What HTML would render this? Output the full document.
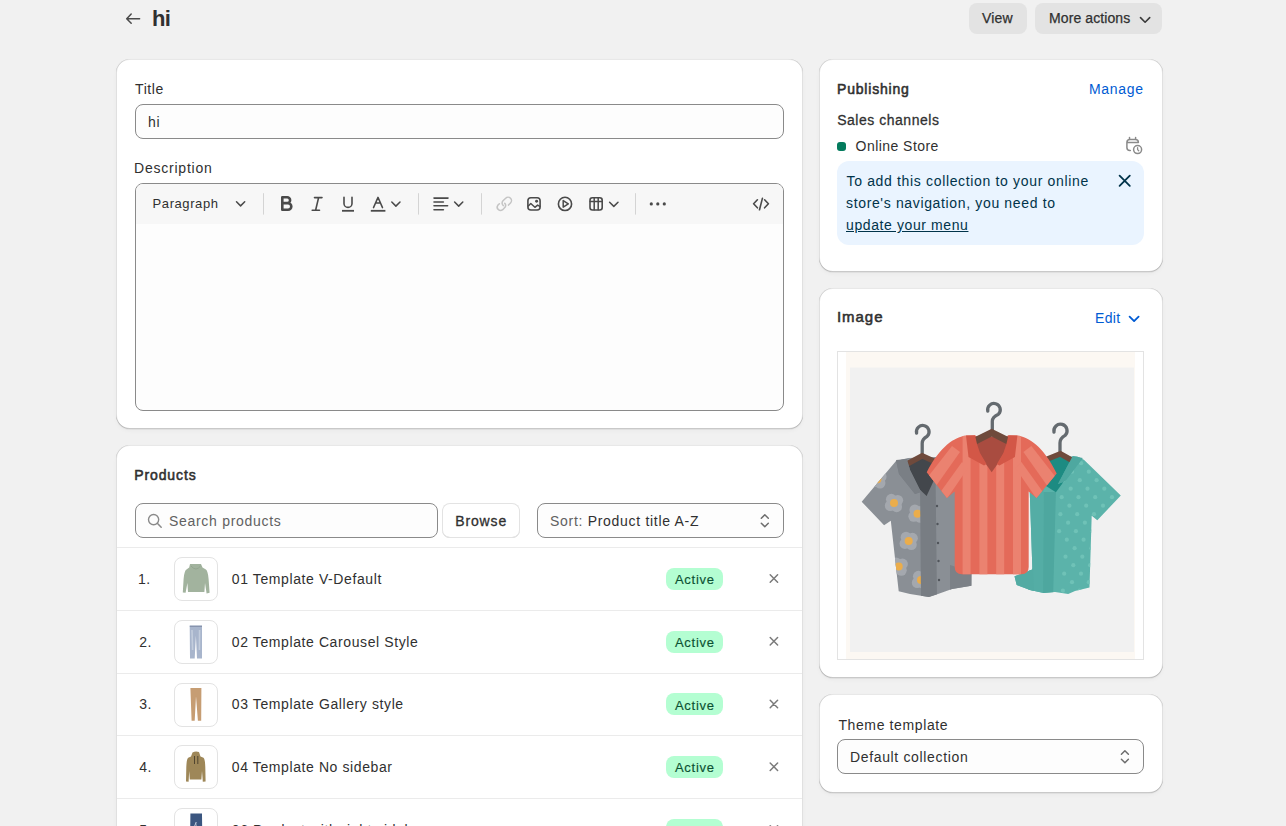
<!DOCTYPE html>
<html><head><meta charset="utf-8">
<style>
*{box-sizing:border-box;margin:0;padding:0}
html,body{width:1286px;height:826px;overflow:hidden;background:#f1f1f1}
body{position:relative;font-family:"Liberation Sans",sans-serif;color:#303030;font-size:14px;line-height:20px}
.a{position:absolute}
.t{position:absolute;white-space:nowrap}
.card{position:absolute;background:#fff;border-radius:14px;box-shadow:0 1px 0 0 rgba(0,0,0,0.045),0 2px 4px 0 rgba(0,0,0,0.03),inset 1px 0 0 rgba(0,0,0,0.12),inset -1px 0 0 rgba(0,0,0,0.12),inset 0 -1px 0 rgba(0,0,0,0.21),inset 0 1px 0 rgba(0,0,0,0.09)}
.btn{position:absolute;background:#e3e3e3;border-radius:8px}
.inp{position:absolute;background:#fdfdfd;border:1px solid #8a8a8a;border-radius:8px}
.sep{position:absolute;height:1px;background:#ebebeb}
.thumb{position:absolute;width:44px;height:44px;border:1px solid #e3e3e3;border-radius:8px;background:#fff;overflow:hidden}
.badge{position:absolute;width:57px;height:22px;border-radius:8px;background:#b4fed2}
svg{display:block}
</style></head><body>
<div class="t" style="left:152px;top:5.38px;font-size:22px;line-height:28px;letter-spacing:-0.8px;font-weight:700;">hi</div>
<div class="btn" style="left:969px;top:3px;width:58px;height:31px;"></div>
<div class="t" style="left:982px;top:8.05px;font-size:14px;line-height:20px;letter-spacing:0.2px;-webkit-text-stroke:0.25px #303030;">View</div>
<div class="btn" style="left:1035px;top:3px;width:127px;height:31px;"></div>
<div class="t" style="left:1049px;top:8.05px;font-size:14px;line-height:20px;letter-spacing:0.1px;-webkit-text-stroke:0.25px #303030;">More actions</div>
<div class="card" style="left:116px;top:59px;width:687px;height:370px"></div>
<div class="card" style="left:116px;top:445px;width:687px;height:420px"></div>
<div class="card" style="left:819px;top:59px;width:344px;height:213px"></div>
<div class="card" style="left:819px;top:288px;width:344px;height:390px"></div>
<div class="card" style="left:819px;top:694px;width:344px;height:99px"></div>
<div class="t" style="left:135px;top:79.15px;font-size:14px;line-height:20px;letter-spacing:0.6px;">Title</div>
<div class="inp" style="left:135px;top:104px;width:649px;height:35px;"></div>
<div class="t" style="left:148px;top:111.95px;font-size:14px;line-height:20px;letter-spacing:0.6px;">hi</div>
<div class="t" style="left:134px;top:157.95px;font-size:14px;line-height:20px;letter-spacing:0.78px;">Description</div>
<div class="inp" style="left:135px;top:183px;width:649px;height:228px;overflow:hidden"><div class="a" style="left:0;top:0;width:100%;height:40px;background:#f7f7f7"></div></div>
<div class="t" style="left:152.6px;top:194.40px;font-size:13px;line-height:20px;letter-spacing:0.58px;">Paragraph</div>
<div class="t" style="left:134.2px;top:465.35px;font-size:14px;line-height:20px;letter-spacing:0.9px;-webkit-text-stroke:0.55px #303030;">Products</div>
<div class="inp" style="left:135px;top:503px;width:303px;height:35px;"></div>
<div class="t" style="left:169px;top:510.75px;font-size:14px;line-height:20px;letter-spacing:0.7px;color:#616161;">Search products</div>
<div class="a" style="left:442px;top:503px;width:78px;height:35px;border-radius:8px;box-shadow:inset 0 0 0 1px #e3e3e3,inset 0 -1px 0 #d4d4d4;background:#fff"></div>
<div class="t" style="left:455.2px;top:510.75px;font-size:14px;line-height:20px;letter-spacing:0.88px;-webkit-text-stroke:0.3px #303030;">Browse</div>
<div class="inp" style="left:537px;top:503px;width:247px;height:35px;"></div>
<div class="t" style="left:550px;top:510.75px;font-size:14px;line-height:20px;letter-spacing:0.7px;"><span style="color:#616161">Sort:</span> Product title A-Z</div>
<div class="sep" style="left:117px;top:547.0px;width:685px;height:1px;"></div>
<div class="t" style="left:138px;top:568.95px;font-size:14px;line-height:20px;letter-spacing:0.4px;">1.</div>
<div class="thumb" style="left:174px;top:557.00px"><svg width="42" height="42" viewBox="1 1 42 42"><path d="M16 7 H27 L28.5 10.5 L31.5 12.2 Q34 13.5 34.6 22 L35.6 35.8 L32.6 36.4 L31 26 L30.4 35 H14 L13.4 26 L11.6 35.8 L8.8 35.4 L9.6 22 Q10.2 13.5 12.8 12.2 L15.2 10.5 Z" fill="#a2b39e"/><path d="M17 9 Q22 15 26.5 9" stroke="#94a690" stroke-width="1" fill="none"/></svg></div>
<div class="t" style="left:231.8px;top:568.95px;font-size:14px;line-height:20px;letter-spacing:0.6px;">01 Template V-Default</div>
<div class="badge" style="left:666px;top:567.8px;width:57px;height:22px;"></div>
<div class="t" style="left:675px;top:570.20px;font-size:13px;line-height:20px;letter-spacing:0.7px;color:#0c5132;-webkit-text-stroke:0.15px #0c5132;">Active</div>
<div class="sep" style="left:117px;top:609.75px;width:685px;height:1px;"></div>
<div class="t" style="left:139.3px;top:631.70px;font-size:14px;line-height:20px;letter-spacing:0.4px;">2.</div>
<div class="thumb" style="left:174px;top:619.75px"><svg width="42" height="42" viewBox="1 1 42 42"><path d="M15.7 5.5 H28 L28 38.4 H23 L21.9 15.7 L20.7 38.4 H16 Z" fill="#a8b5cc"/><path d="M15.8 6.3 H28" stroke="#8793ad" stroke-width="1.2"/><path d="M18 10 L18.6 30 M25.6 10 L25.4 30" stroke="#c3cddd" stroke-width="1.6"/></svg></div>
<div class="t" style="left:231.8px;top:631.70px;font-size:14px;line-height:20px;letter-spacing:0.6px;">02 Template Carousel Style</div>
<div class="badge" style="left:666px;top:630.55px;width:57px;height:22px;"></div>
<div class="t" style="left:675px;top:632.95px;font-size:13px;line-height:20px;letter-spacing:0.7px;color:#0c5132;-webkit-text-stroke:0.15px #0c5132;">Active</div>
<div class="sep" style="left:117px;top:672.5px;width:685px;height:1px;"></div>
<div class="t" style="left:139.3px;top:694.45px;font-size:14px;line-height:20px;letter-spacing:0.4px;">3.</div>
<div class="thumb" style="left:174px;top:682.50px"><svg width="42" height="42" viewBox="1 1 42 42"><path d="M16.4 5 H27.4 L27.2 37.8 H23.9 L22 13.2 L20.7 37.8 H17.6 Z" fill="#c69d73"/></svg></div>
<div class="t" style="left:231.8px;top:694.45px;font-size:14px;line-height:20px;letter-spacing:0.6px;">03 Template Gallery style</div>
<div class="badge" style="left:666px;top:693.3px;width:57px;height:22px;"></div>
<div class="t" style="left:675px;top:695.70px;font-size:13px;line-height:20px;letter-spacing:0.7px;color:#0c5132;-webkit-text-stroke:0.15px #0c5132;">Active</div>
<div class="sep" style="left:117px;top:735.25px;width:685px;height:1px;"></div>
<div class="t" style="left:139.3px;top:757.20px;font-size:14px;line-height:20px;letter-spacing:0.4px;">4.</div>
<div class="thumb" style="left:174px;top:745.25px"><svg width="42" height="42" viewBox="1 1 42 42"><path d="M18.5 7.5 Q21.5 5.8 25 7 L26.5 11.5 L29.5 12.8 Q31 14 31.3 22 L31.6 36.6 L28.8 36.8 L28 26 L27.4 34.6 H15.8 L15.2 26 L14.6 36.8 L12 36.6 L12.3 22 Q12.6 14 14.2 12.8 L17 11.5 Z" fill="#9e8758"/><path d="M20.5 11 V19 M23.8 11 V19" stroke="#3e3524" stroke-width="0.8"/></svg></div>
<div class="t" style="left:231.8px;top:757.20px;font-size:14px;line-height:20px;letter-spacing:0.6px;">04 Template No sidebar</div>
<div class="badge" style="left:666px;top:756.05px;width:57px;height:22px;"></div>
<div class="t" style="left:675px;top:758.45px;font-size:13px;line-height:20px;letter-spacing:0.7px;color:#0c5132;-webkit-text-stroke:0.15px #0c5132;">Active</div>
<div class="sep" style="left:117px;top:798.0px;width:685px;height:1px;"></div>
<div class="t" style="left:139.3px;top:819.95px;font-size:14px;line-height:20px;letter-spacing:0.4px;">5.</div>
<div class="thumb" style="left:174px;top:808.00px"><svg width="42" height="42" viewBox="1 1 42 42"><path d="M16.4 5.5 H28 L28.4 38.6 H23.4 L22.2 14 L21 38.6 H16 Z" fill="#3b5680"/><path d="M22.2 14 L20 20" stroke="#c9d3e3" stroke-width="1"/></svg></div>
<div class="t" style="left:231.8px;top:819.95px;font-size:14px;line-height:20px;letter-spacing:0.6px;">06 Product with right sidebar</div>
<div class="badge" style="left:666px;top:818.8px;width:57px;height:22px;"></div>
<div class="t" style="left:675px;top:821.20px;font-size:13px;line-height:20px;letter-spacing:0.7px;color:#0c5132;-webkit-text-stroke:0.15px #0c5132;">Active</div>
<div class="t" style="left:837px;top:78.85px;font-size:14px;line-height:20px;letter-spacing:0.8px;-webkit-text-stroke:0.55px #303030;">Publishing</div>
<div class="t" style="left:1089px;top:78.85px;font-size:14px;line-height:20px;letter-spacing:0.68px;color:#005bd3;">Manage</div>
<div class="t" style="left:837.2px;top:109.65px;font-size:14px;line-height:20px;letter-spacing:0.52px;-webkit-text-stroke:0.28px #303030;">Sales channels</div>
<div class="a" style="left:837px;top:142px;width:9px;height:9px;border-radius:3px;background:#047b5d"></div>
<div class="t" style="left:855.6px;top:135.75px;font-size:14px;line-height:20px;letter-spacing:0.45px;">Online Store</div>
<div class="a" style="left:837px;top:161px;width:307px;height:84px;border-radius:12px;background:#eaf4ff"></div>
<div class="t" style="left:846.5px;top:170.35px;font-size:14px;line-height:22px;letter-spacing:0.66px;color:#00334a;">To add this collection to your online</div>
<div class="t" style="left:846px;top:192.35px;font-size:14px;line-height:22px;letter-spacing:0.65px;color:#00334a;">store's navigation, you need to</div>
<div class="t" style="left:846px;top:214.35px;font-size:14px;line-height:22px;letter-spacing:0.6px;color:#00334a;"><span style="text-decoration:underline">update your menu</span></div>
<div class="t" style="left:837px;top:307.40px;font-size:15px;line-height:20px;letter-spacing:0.95px;-webkit-text-stroke:0.55px #303030;">Image</div>
<div class="t" style="left:1095px;top:308.15px;font-size:14px;line-height:20px;letter-spacing:0.3px;color:#005bd3;">Edit</div>
<div class="a" style="left:837px;top:351px;width:307px;height:309px;border:1px solid #e3e3e3;background:#fff"></div>
<div class="a" style="left:846px;top:352px;width:289px;height:307px;background:#fcf8f3"></div>
<svg class="a" style="left:846px;top:352px" width="289" height="307" viewBox="846 352 289 307">
 <rect x="846" y="352" width="289" height="307" fill="#fcf8f3"/>
 <rect x="850" y="367.6" width="284" height="284.4" fill="#f1f1f1"/>
 <defs>
  <clipPath id="gshirt"><path d="M896 461 L908 458 L936 457 L972 470 L971.4 585.7 L952 589 L938 594 L928.9 597 L910 594 L898.7 591.3 L890.8 520.7 L884.1 525.2 L861.7 501.7 Z"/></clipPath>
  <clipPath id="tshirt"><path d="M1047 457 L1077.2 456.4 L1083.9 459.8 L1120.8 495.6 L1097.3 520.2 L1091.7 515.7 L1089.5 587.4 L1075 591 L1068.2 594.1 L1055 592 L1043.6 593 L1030 590 L1016.7 585.1 L1014.5 576.2 L1032.4 569.5 L1029 470 Z"/></clipPath>
 </defs>
 <!-- hooks -->
 <g fill="none" stroke="#646a6f" stroke-width="3.3" stroke-linecap="round">
  <path d="M916.59 433.06 A6.3 6.3 0 1 1 927.24 436.21 Q922.2 439.05 922.2 443.14 V454"/>
  <path d="M1054.00 432.12 A6.6 6.6 0 1 1 1065.15 435.42 Q1060.0 438.39 1060.0 442.68 V452"/>
  <path d="M987.79 411.06 A6.3 6.3 0 1 1 998.44 414.21 Q992.3 417.05 992.3 421.14 V432"/>
 </g>
 <!-- gray shirt -->
 
 <g clip-path="url(#gshirt)">
  <rect x="850" y="440" width="130" height="170" fill="#8a8f95"/>
  <circle cx="880.04" cy="483.07" r="5.4" fill="#a4a8ae"/><circle cx="873.63" cy="481.94" r="5.4" fill="#a4a8ae"/><circle cx="874.76" cy="475.53" r="5.4" fill="#a4a8ae"/><circle cx="881.17" cy="476.66" r="5.4" fill="#a4a8ae"/><circle cx="877.4" cy="479.3" r="4" fill="#ebad4b"/><circle cx="896.64" cy="506.77" r="5.4" fill="#a4a8ae"/><circle cx="890.23" cy="505.64" r="5.4" fill="#a4a8ae"/><circle cx="891.36" cy="499.23" r="5.4" fill="#a4a8ae"/><circle cx="897.77" cy="500.36" r="5.4" fill="#a4a8ae"/><circle cx="894.0" cy="503.0" r="4" fill="#ebad4b"/><circle cx="920.14" cy="517.47" r="5.4" fill="#a4a8ae"/><circle cx="913.73" cy="516.34" r="5.4" fill="#a4a8ae"/><circle cx="914.86" cy="509.93" r="5.4" fill="#a4a8ae"/><circle cx="921.27" cy="511.06" r="5.4" fill="#a4a8ae"/><circle cx="917.5" cy="513.7" r="4" fill="#ebad4b"/><circle cx="911.34" cy="544.67" r="5.4" fill="#a4a8ae"/><circle cx="904.93" cy="543.54" r="5.4" fill="#a4a8ae"/><circle cx="906.06" cy="537.13" r="5.4" fill="#a4a8ae"/><circle cx="912.47" cy="538.26" r="5.4" fill="#a4a8ae"/><circle cx="908.7" cy="540.9" r="4" fill="#ebad4b"/><circle cx="901.34" cy="570.37" r="5.4" fill="#a4a8ae"/><circle cx="894.93" cy="569.24" r="5.4" fill="#a4a8ae"/><circle cx="896.06" cy="562.83" r="5.4" fill="#a4a8ae"/><circle cx="902.47" cy="563.96" r="5.4" fill="#a4a8ae"/><circle cx="898.7" cy="566.6" r="4" fill="#ebad4b"/><circle cx="923.64" cy="583.77" r="5.4" fill="#a4a8ae"/><circle cx="917.23" cy="582.64" r="5.4" fill="#a4a8ae"/><circle cx="918.36" cy="576.23" r="5.4" fill="#a4a8ae"/><circle cx="924.77" cy="577.36" r="5.4" fill="#a4a8ae"/><circle cx="921" cy="580" r="4" fill="#ebad4b"/>
  <path d="M920 480 L935.6 480 L937 600 L921 600 Z" fill="#787d83"/>
  <path d="M906 462 Q922 454 938 461 L934 480 L926.6 496 L914 484 Z" fill="#43474c"/>
  <path d="M896 460 L907 459 L910 470 L921 492 L915 494 L899 474 Z" fill="#7a7f85"/>
  <circle cx="937" cy="506" r="1.2" fill="#50545a"/><circle cx="937.5" cy="524" r="1.2" fill="#50545a"/><circle cx="938" cy="543" r="1.2" fill="#50545a"/><circle cx="938.5" cy="561" r="1.2" fill="#50545a"/><circle cx="939" cy="580" r="1.2" fill="#50545a"/>
  <path d="M950 565 L972 572 L972 590 L950 590 Z" fill="#7c8187"/>
 </g>
 <path d="M908 463.5 L922.2 455.8 L936.8 462.5" fill="none" stroke="#6f4a3c" stroke-width="5.5" stroke-linejoin="miter"/>
 <path d="M896 460 L907 459 L910 470 L921 492 L915 494 L899 474 Z" fill="#7a7f85"/>

 <!-- teal shirt -->
 
 <g clip-path="url(#tshirt)">
  <rect x="1010" y="440" width="120" height="170" fill="#5bb3aa"/>
  <circle cx="1064.3" cy="463.2" r="2.1" fill="#6fc2b7"/><circle cx="1081.1" cy="463.2" r="2.1" fill="#6fc2b7"/><circle cx="1097.9" cy="463.2" r="2.1" fill="#6fc2b7"/><circle cx="1114.7" cy="463.2" r="2.1" fill="#6fc2b7"/><circle cx="1131.5" cy="463.2" r="2.1" fill="#6fc2b7"/><circle cx="1072.0" cy="471.7" r="2.1" fill="#6fc2b7"/><circle cx="1088.8" cy="471.7" r="2.1" fill="#6fc2b7"/><circle cx="1105.6" cy="471.7" r="2.1" fill="#6fc2b7"/><circle cx="1122.4" cy="471.7" r="2.1" fill="#6fc2b7"/><circle cx="1063.0" cy="480.2" r="2.1" fill="#6fc2b7"/><circle cx="1079.8" cy="480.2" r="2.1" fill="#6fc2b7"/><circle cx="1096.6" cy="480.2" r="2.1" fill="#6fc2b7"/><circle cx="1113.4" cy="480.2" r="2.1" fill="#6fc2b7"/><circle cx="1130.2" cy="480.2" r="2.1" fill="#6fc2b7"/><circle cx="1070.7" cy="488.7" r="2.1" fill="#6fc2b7"/><circle cx="1087.5" cy="488.7" r="2.1" fill="#6fc2b7"/><circle cx="1104.3" cy="488.7" r="2.1" fill="#6fc2b7"/><circle cx="1121.1" cy="488.7" r="2.1" fill="#6fc2b7"/><circle cx="1061.7" cy="497.2" r="2.1" fill="#6fc2b7"/><circle cx="1078.5" cy="497.2" r="2.1" fill="#6fc2b7"/><circle cx="1095.2" cy="497.2" r="2.1" fill="#6fc2b7"/><circle cx="1112.0" cy="497.2" r="2.1" fill="#6fc2b7"/><circle cx="1128.9" cy="497.2" r="2.1" fill="#6fc2b7"/><circle cx="1069.4" cy="505.7" r="2.1" fill="#6fc2b7"/><circle cx="1086.2" cy="505.7" r="2.1" fill="#6fc2b7"/><circle cx="1103.0" cy="505.7" r="2.1" fill="#6fc2b7"/><circle cx="1119.8" cy="505.7" r="2.1" fill="#6fc2b7"/><circle cx="1060.4" cy="514.2" r="2.1" fill="#6fc2b7"/><circle cx="1077.2" cy="514.2" r="2.1" fill="#6fc2b7"/><circle cx="1094.0" cy="514.2" r="2.1" fill="#6fc2b7"/><circle cx="1110.8" cy="514.2" r="2.1" fill="#6fc2b7"/><circle cx="1127.6" cy="514.2" r="2.1" fill="#6fc2b7"/><circle cx="1068.1" cy="522.7" r="2.1" fill="#6fc2b7"/><circle cx="1084.9" cy="522.7" r="2.1" fill="#6fc2b7"/><circle cx="1101.7" cy="522.7" r="2.1" fill="#6fc2b7"/><circle cx="1118.5" cy="522.7" r="2.1" fill="#6fc2b7"/><circle cx="1059.1" cy="531.2" r="2.1" fill="#6fc2b7"/><circle cx="1075.9" cy="531.2" r="2.1" fill="#6fc2b7"/><circle cx="1092.7" cy="531.2" r="2.1" fill="#6fc2b7"/><circle cx="1109.5" cy="531.2" r="2.1" fill="#6fc2b7"/><circle cx="1126.3" cy="531.2" r="2.1" fill="#6fc2b7"/><circle cx="1066.8" cy="539.7" r="2.1" fill="#6fc2b7"/><circle cx="1083.6" cy="539.7" r="2.1" fill="#6fc2b7"/><circle cx="1100.4" cy="539.7" r="2.1" fill="#6fc2b7"/><circle cx="1117.2" cy="539.7" r="2.1" fill="#6fc2b7"/><circle cx="1074.6" cy="548.2" r="2.1" fill="#6fc2b7"/><circle cx="1091.4" cy="548.2" r="2.1" fill="#6fc2b7"/><circle cx="1108.2" cy="548.2" r="2.1" fill="#6fc2b7"/><circle cx="1125.0" cy="548.2" r="2.1" fill="#6fc2b7"/><circle cx="1065.5" cy="556.7" r="2.1" fill="#6fc2b7"/><circle cx="1082.3" cy="556.7" r="2.1" fill="#6fc2b7"/><circle cx="1099.1" cy="556.7" r="2.1" fill="#6fc2b7"/><circle cx="1115.9" cy="556.7" r="2.1" fill="#6fc2b7"/><circle cx="1073.3" cy="565.2" r="2.1" fill="#6fc2b7"/><circle cx="1090.1" cy="565.2" r="2.1" fill="#6fc2b7"/><circle cx="1106.9" cy="565.2" r="2.1" fill="#6fc2b7"/><circle cx="1123.7" cy="565.2" r="2.1" fill="#6fc2b7"/><circle cx="1064.2" cy="573.7" r="2.1" fill="#6fc2b7"/><circle cx="1081.0" cy="573.7" r="2.1" fill="#6fc2b7"/><circle cx="1097.8" cy="573.7" r="2.1" fill="#6fc2b7"/><circle cx="1114.6" cy="573.7" r="2.1" fill="#6fc2b7"/><circle cx="1072.0" cy="582.2" r="2.1" fill="#6fc2b7"/><circle cx="1088.8" cy="582.2" r="2.1" fill="#6fc2b7"/><circle cx="1105.5" cy="582.2" r="2.1" fill="#6fc2b7"/><circle cx="1122.4" cy="582.2" r="2.1" fill="#6fc2b7"/><circle cx="1062.9" cy="590.7" r="2.1" fill="#6fc2b7"/><circle cx="1079.7" cy="590.7" r="2.1" fill="#6fc2b7"/><circle cx="1096.5" cy="590.7" r="2.1" fill="#6fc2b7"/><circle cx="1113.3" cy="590.7" r="2.1" fill="#6fc2b7"/><circle cx="1070.7" cy="599.2" r="2.1" fill="#6fc2b7"/><circle cx="1087.5" cy="599.2" r="2.1" fill="#6fc2b7"/><circle cx="1104.2" cy="599.2" r="2.1" fill="#6fc2b7"/><circle cx="1121.1" cy="599.2" r="2.1" fill="#6fc2b7"/>
  <path d="M1028 470 L1043.6 470 L1043 600 L1028 600 Z" fill="#54ada5"/><path d="M1043.6 492 L1055.9 492 L1053 600 L1043 600 Z" fill="#4ea79f"/>
  <path d="M1044 459 Q1060 453 1074 462 L1062 484 L1055.9 492.2 L1046 486 Z" fill="#1d8b82"/>
  <path d="M1072.7 456 L1082.8 458 L1066 480 L1062.6 482.2 L1058 484 Z" fill="#4ea8a0"/>
  <path d="M1014 576 L1033 568 L1034 592 L1014 592 Z" fill="#52aba3"/>
 </g>
 <path d="M1045 460 L1060.4 453.8 L1074 461.5" fill="none" stroke="#6f4a3c" stroke-width="5.5" stroke-linejoin="miter"/>
 <path d="M1072.7 456 L1082.8 458 L1066 480 L1062.6 482.2 L1058 484 Z" fill="#4ea8a0"/>

 <!-- coral shirt -->
 
 <defs>
  <clipPath id="cshirt"><path d="M966 435.5 L975.5 435.5 Q991.7 447 1008 435.5 L1017.4 435.5 C1028.4 437 1043.4 446 1056.7 473.4 L1036.5 498.1 L1028.7 491.4 L1028.7 567 Q1028.7 574.3 1021.4 574.3 L962 574.3 Q954.7 574.3 954.7 567 L954.7 491.4 L946.9 498.1 L926.7 472.3 C940 446 955 437 966 435.5 Z"/></clipPath>
 </defs>
 <g clip-path="url(#cshirt)">
  <rect x="920" y="430" width="140" height="150" fill="#e46a59"/>
  <rect x="962.6" y="436" width="8" height="140" fill="#eb8270"/><rect x="979.4" y="436" width="8" height="140" fill="#eb8270"/><rect x="996.2" y="436" width="8" height="140" fill="#eb8270"/><rect x="1013" y="436" width="8" height="140" fill="#eb8270"/>
  <path d="M927 478 L952 446 L960 452 L936 486 Z" fill="#eb8270"/>
  <path d="M939 494 L962 462 L968 468 L946 500 Z" fill="#eb8270"/>
  <path d="M1056.4 478 L1031.4 446 L1023.4 452 L1047.4 486 Z" fill="#eb8270"/>
  <path d="M1044.4 494 L1021.4 462 L1015.4 468 L1037.4 500 Z" fill="#eb8270"/>
  <rect x="954.7" y="490" width="74" height="90" fill="none"/>
 </g>
 <path d="M954.7 491.4 L954.7 567 Q954.7 574.3 962 574.3 L1021.4 574.3 Q1028.7 574.3 1028.7 567 L1028.7 491.4" fill="none"/>
 <path d="M975.5 443 Q991.7 430 1007.9 443 L1004 453 L997.9 463.6 L991.7 472.3 L985.5 463.6 L979 453 Z" fill="#a94c40"/>
 <path d="M975 441 L991.7 432.6 L1008.4 441" fill="none" stroke="#6f4a3c" stroke-width="7" stroke-linejoin="miter"/>
 <path d="M966 435.6 L975 435.3 L977 444 L980 453 L986.5 464 L984 465.5 L968.5 457 Z" fill="#d35747"/>
 <path d="M1017.4 435.6 L1008.4 435.3 L1006.4 444 L1003.4 453 L996.9 464 L999.4 465.5 L1014.9 457 Z" fill="#d35747"/>
</svg>
<div class="t" style="left:838.4px;top:714.85px;font-size:14px;line-height:20px;letter-spacing:0.62px;">Theme template</div>
<div class="inp" style="left:837px;top:739px;width:307px;height:35px;"></div>
<div class="t" style="left:850px;top:747.45px;font-size:14px;line-height:20px;letter-spacing:0.65px;">Default collection</div>
<svg class="a" style="left:0;top:0;z-index:5" width="1286" height="826" viewBox="0 0 1286 826">
<g fill="none" stroke-linecap="round" stroke-linejoin="round">
 <!-- header arrow -->
 <path d="M131.2 14.1 L126.7 18.7 L131.2 23.3 M126.9 18.7 H139.6" stroke="#4a4a4a" stroke-width="1.5"/>
 <!-- more actions chevron -->
 <path d="M1140.5 17.6 L1145.1 22.2 L1149.7 17.6" stroke="#3a3a3a" stroke-width="1.6"/>
 <!-- toolbar -->
 <path d="M236.5 201.8 L240.6 205.9 L244.7 201.8" stroke="#4a4a4a" stroke-width="1.5"/>
 <path d="M282.3 197.3 H287.2 A2.9 2.9 0 0 1 287.2 203.1 H282.3 M282.3 203.1 H288 A3.3 3.3 0 0 1 288 209.7 H282.3 M282.3 197.3 V209.7" stroke="#4a4a4a" stroke-width="2.6"/>
 <path d="M314.5 197.6 H322 M312.2 210.3 H319.5 M318.6 197.6 L315.6 210.3" stroke="#4a4a4a" stroke-width="1.6"/>
 <path d="M344 197.2 V203.4 A4 4 0 0 0 352 203.4 V197.2" stroke="#4a4a4a" stroke-width="1.6"/>
 <path d="M342 210.8 H354" stroke="#4a4a4a" stroke-width="1.8" stroke-linecap="butt"/>
 <path d="M373.5 207.6 L378 197.4 L382.5 207.6 M375.6 203.1 H380.4" stroke="#4a4a4a" stroke-width="1.5"/>
 <path d="M370.8 210.8 H385.4" stroke="#4a4a4a" stroke-width="1.8" stroke-linecap="butt"/>
 <path d="M391.8 202 L395.9 206.1 L400 202" stroke="#4a4a4a" stroke-width="1.5"/>
 <path d="M434 198.1 H448 M434 202 H443.4 M434 205.8 H447.6 M434 209.7 H443.4" stroke="#4a4a4a" stroke-width="1.6"/>
 <path d="M454.6 202 L458.7 206.1 L462.8 202" stroke="#4a4a4a" stroke-width="1.5"/>
 <!-- link (disabled) -->
 <path d="M508.4 204.2 L510.4 202.1 A3.35 3.35 0 0 0 505.6 197.3 L502.9 199.9 Q501.3 201.7 502.5 203.7 L503.2 204.8" stroke="#c4c4c4" stroke-width="1.5" transform="translate(0.1,0.9)"/>
 <path d="M504.6 202.4 Q506.3 204.1 505.1 206.2 L502.6 208.8 A3.35 3.35 0 0 1 497.8 204.2 L499.3 202.8" stroke="#c4c4c4" stroke-width="1.5" transform="translate(0.1,0.9)"/>
 <!-- image icon -->
 <rect x="527.9" y="197.8" width="12.2" height="12.2" rx="3" stroke="#4a4a4a" stroke-width="1.6"/>
 <path d="M528.3 206 L530.8 203.5 L534.9 207.3 L537.6 205.1 L539.8 206.4" stroke="#4a4a4a" stroke-width="1.5"/>
 <circle cx="536.6" cy="201.3" r="1.45" fill="#4a4a4a" stroke="none"/>
 <!-- play -->
 <circle cx="565" cy="203.9" r="6.6" stroke="#4a4a4a" stroke-width="1.6"/>
 <path d="M563.2 200.6 L568.3 203.9 L563.2 207.2 Z" stroke="#4a4a4a" stroke-width="1.5"/>
 <!-- table -->
 <rect x="590" y="197.8" width="12.2" height="12.2" rx="2.4" stroke="#4a4a4a" stroke-width="1.6"/>
 <path d="M590.2 201.6 H601.8 M594.2 198 V209.8 M598.2 198 V209.8" stroke="#4a4a4a" stroke-width="1.5"/>
 <path d="M609.6 202.2 L613.8 206.4 L618 202.2" stroke="#4a4a4a" stroke-width="1.5"/>
 <!-- dots -->
 <circle cx="651.3" cy="203.9" r="1.6" fill="#4a4a4a" stroke="none"/>
 <circle cx="657.8" cy="203.9" r="1.6" fill="#4a4a4a" stroke="none"/>
 <circle cx="664.3" cy="203.9" r="1.6" fill="#4a4a4a" stroke="none"/>
 <!-- code -->
 <path d="M757.4 199.8 L753.6 203.8 L757.4 207.8 M764.6 199.8 L768.4 203.8 L764.6 207.8 M762.4 198.4 L759.5 209.8" stroke="#4a4a4a" stroke-width="1.6"/>
 <!-- separators -->
 <path d="M263.5 193.2 V214.6 M418.5 193.2 V214.6 M481.5 193.2 V214.6 M635.5 193.2 V214.6" stroke="#d4d4d4" stroke-width="1" stroke-linecap="butt"/>
 <!-- search -->
 <circle cx="153.6" cy="519.6" r="5.1" stroke="#8a8a8a" stroke-width="1.4"/>
 <path d="M157.3 523.3 L161.2 527.2" stroke="#8a8a8a" stroke-width="1.5"/>
 <!-- sort arrows -->
 <path d="M761.3 518.3 L764.8 514.8 L768.3 518.3 M761.3 523.2 L764.8 526.7 L768.3 523.2" stroke="#6e6e6e" stroke-width="1.5"/>
 <!-- theme arrows -->
 <path d="M1121.4 754.3 L1124.9 750.8 L1128.4 754.3 M1121.4 759.2 L1124.9 762.7 L1128.4 759.2" stroke="#6e6e6e" stroke-width="1.5"/>
 <!-- edit chevron -->
 <path d="M1129.6 316.6 L1134.1 321.1 L1138.6 316.6" stroke="#005bd3" stroke-width="1.8"/>
 <!-- banner X -->
 <path d="M1119.6 175.6 L1129.8 185.8 M1129.8 175.6 L1119.6 185.8" stroke="#00334a" stroke-width="1.8"/>
<path d="M770.2 574.80 L777.6 582.20 M777.6 574.80 L770.2 582.20" stroke="#7a7a7a" stroke-width="1.5"/>
<path d="M770.2 637.55 L777.6 644.95 M777.6 637.55 L770.2 644.95" stroke="#7a7a7a" stroke-width="1.5"/>
<path d="M770.2 700.30 L777.6 707.70 M777.6 700.30 L770.2 707.70" stroke="#7a7a7a" stroke-width="1.5"/>
<path d="M770.2 763.05 L777.6 770.45 M777.6 763.05 L770.2 770.45" stroke="#7a7a7a" stroke-width="1.5"/>
<path d="M770.2 825.80 L777.6 833.20 M777.6 825.80 L770.2 833.20" stroke="#7a7a7a" stroke-width="1.5"/>
 <!-- calendar -->
 <path d="M1129.5 137.6 V139.4 M1135.6 137.6 V139.4 M1130.3 150.5 H1129.9 A3 3 0 0 1 1126.9 147.5 V142.4 A3 3 0 0 1 1129.9 139.4 H1135.4 A3 3 0 0 1 1138.4 142.4 M1127 142.5 H1138.3" stroke="#8a8a8a" stroke-width="1.5"/>
 <circle cx="1137.6" cy="149.6" r="4" stroke="#8a8a8a" stroke-width="1.5"/>
 <path d="M1137.6 147.6 V149.6 L1138.7 150.7" stroke="#8a8a8a" stroke-width="1.3"/>
</g>
</svg>
</body></html>
